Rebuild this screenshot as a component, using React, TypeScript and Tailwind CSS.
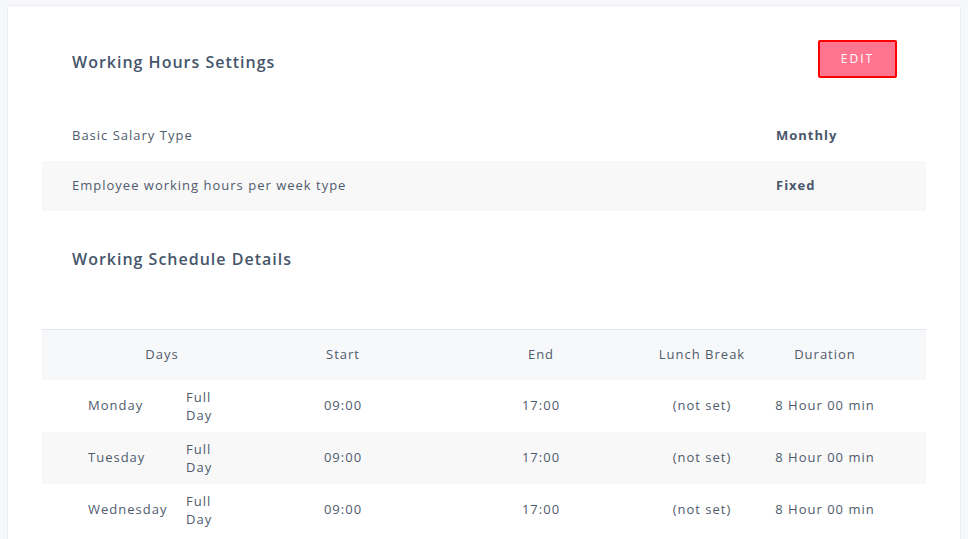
import React from "react";

const rows = [
  { day: "Monday", bg: "bg-white" },
  { day: "Tuesday", bg: "bg-[#f8f8f9]" },
  { day: "Wednesday", bg: "bg-white" },
];

export default function App() {
  return (
    <div
      className="w-[968px] h-[539px] overflow-hidden bg-[#f6f7fa] pt-[5px] pl-[7px] text-[#4f5b6d]"
      style={{ fontFamily: '"Open Sans", "Liberation Sans", sans-serif' }}
    >
      <div className="w-[954px] h-[560px] bg-white border border-[#eceef3] rounded-[3px] px-[34px]">
        {/* Header */}
        <div className="h-[105px] flex items-center justify-between pl-[30px] pr-[29px]">
          <h1 className="text-[16px] font-semibold tracking-[1px] text-[#46566b] mt-[6px]">
            Working Hours Settings
          </h1>
          <button className="w-[79px] h-[38px] bg-[#ff7590] border-2 border-[#ff0000] rounded-[2px] text-white text-[12px] font-medium tracking-[2px] flex items-center justify-center">
            EDIT
          </button>
        </div>

        {/* Info rows */}
        <div className="text-[13px] tracking-[1px]">
          <div className="h-[50px] flex items-center">
            <div className="pl-[30px] w-[734px]">Basic Salary Type</div>
            <div className="font-bold text-[#4a576b]">Monthly</div>
          </div>
          <div className="h-[50px] flex items-center bg-[#f8f8f9]">
            <div className="pl-[30px] w-[734px]">Employee working hours per week type</div>
            <div className="font-bold text-[#4a576b]">Fixed</div>
          </div>
        </div>

        {/* Schedule title */}
        <div className="h-[118px] pl-[30px] pt-[36px]">
          <h2 className="text-[16px] font-semibold tracking-[1px] text-[#46566b]">
            Working Schedule Details
          </h2>
        </div>

        {/* Table */}
        <div className="border-t border-[#e3e5ea] text-[13px] tracking-[1px]">
          <div className="h-[50px] flex items-center bg-[#f7f8fa]">
            <div className="w-[240px] text-center">Days</div>
            <div className="w-[122px] text-center">Start</div>
            <div className="w-[274px] text-center">End</div>
            <div className="w-[48px] flex justify-center whitespace-nowrap">Lunch Break</div>
            <div className="w-[198px] text-center">Duration</div>
          </div>
          {rows.map((r) => (
            <div key={r.day} className={`h-[52px] flex items-center ${r.bg}`}>
              <div className="w-[240px] flex items-center">
                <div className="pl-[46px] w-[144px]">{r.day}</div>
                <div className="w-[40px] leading-[18px]">Full Day</div>
              </div>
              <div className="w-[122px] text-center">09:00</div>
              <div className="w-[274px] text-center">17:00</div>
              <div className="w-[48px] flex justify-center whitespace-nowrap">(not set)</div>
              <div className="w-[198px] text-center">8 Hour 00 min</div>
            </div>
          ))}
        </div>
      </div>
    </div>
  );
}
